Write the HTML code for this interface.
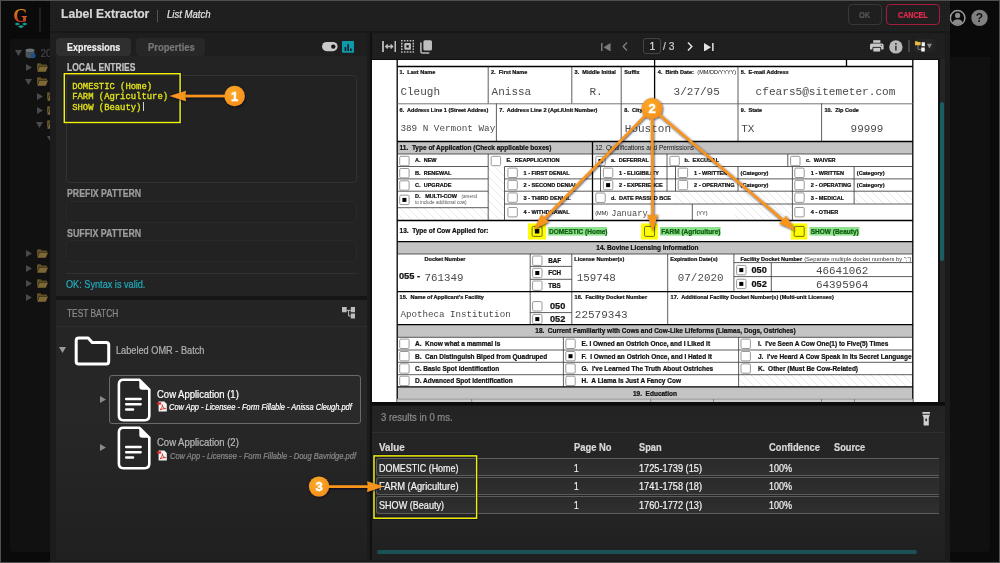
<!DOCTYPE html>
<html lang="en">
<head>
<meta charset="utf-8">
<title>Label Extractor - List Match</title>
<style>
*{box-sizing:border-box;margin:0;padding:0}
html,body{width:1000px;height:563px;overflow:hidden;background:#0a0a0a}
body{font-family:"Liberation Sans","DejaVu Sans",sans-serif;color:#ccc;position:relative}
div,span,svg,section,header,nav,ul,li,table,button{position:absolute}
.t{white-space:nowrap;line-height:1;transform-origin:0 50%;display:block;-webkit-text-stroke:.22px currentColor}
svg text{white-space:pre}
#app,#modal,#anno,svg.form{will-change:transform}
.form .fs{font-family:"Liberation Sans","DejaVu Sans",sans-serif}
.form .fm{font-family:"Liberation Mono","DejaVu Sans Mono",monospace}
.tex{background-image:linear-gradient(rgba(0,0,0,.09) 1px,transparent 1px),linear-gradient(90deg,rgba(0,0,0,.09) 1px,transparent 1px);background-size:2px 2px}
button{font-family:inherit;background:none;cursor:pointer}
#frame{left:0;top:0;width:1000px;height:563px;border:1px solid #505050;z-index:50;pointer-events:none}
</style>
</head>
<body>
<div id="app" style="left:0;top:0;width:1000px;height:563px;background:#0a0a0a">
<svg style="left:12px;top:6px" width="20" height="24" viewBox="0 0 20 24"><defs><linearGradient id="lg" x1="0" y1="0" x2="0" y2="1"><stop offset="0" stop-color="#e39a1c"/><stop offset="1" stop-color="#c2201c"/></linearGradient></defs><text x="1.2" y="15.7" font-family="Liberation Serif,serif" font-weight="bold" font-size="18.5" fill="url(#lg)">G</text><path d="M2.4 18.1l2.9-1.5 2.9 1.5-2.9 1.5zM9.8 18.1l2.9-1.5 2.9 1.5-2.9 1.5zM5.9 20.6l3.1-1.6 3.1 1.6-3.1 1.6z" fill="#12998f"/></svg>
<div style="left:39px;top:7px;width:1.5px;height:25px;background:#1f1f1f;border-radius:1px"></div>
<nav id="sidebar" style="left:10px;top:39px;width:60px;height:513px;background:#111;border-radius:4px">
<svg style="left:5px;top:11px" width="7" height="6" viewBox="0 0 7 6"><path d="M0 0L7 0L3.5 6z" fill="#4a4a4a"/></svg>
<svg style="left:15.4px;top:8.5px" width="11" height="11" viewBox="0 0 11 11"><ellipse cx="5" cy="2.4" rx="4.4" ry="1.9" fill="#6b7076"/><path d="M.6 2.4V8.3C.6 9.4 2.6 10.2 5 10.2S9.4 9.4 9.4 8.3V2.4C9.4 3.5 7.4 4.3 5 4.3S.6 3.5.6 2.4z" fill="#4e5359"/><circle cx="8" cy="7.6" r="2.6" fill="#1f4f86"/></svg>
<span class="t" style="left:30.40px;top:8.60px;font-size:10px;line-height:11px;color:#444;">20</span>
<svg style="left:15.5px;top:24.9px" width="6" height="7" viewBox="0 0 6 7"><path d="M0 0L6 3.5L0 7z" fill="#4a4a4a"/></svg>
<svg style="left:26.5px;top:23.9px" width="11" height="9" viewBox="0 0 11 9"><path d="M0 1.2Q0 .3 .9 .3H3.6L4.6 1.5H9.3Q10 1.5 10 2.3V3H2.4L0 8.2z" fill="#5e4f27"/><path d="M2.6 3.4H11L8.8 8.7H.3z" fill="#7d6833"/></svg>
<svg style="left:15px;top:39.5px" width="7" height="6" viewBox="0 0 7 6"><path d="M0 0L7 0L3.5 6z" fill="#4a4a4a"/></svg>
<svg style="left:26.5px;top:38.0px" width="11" height="9" viewBox="0 0 11 9"><path d="M0 1.2Q0 .3 .9 .3H3.6L4.6 1.5H9.3Q10 1.5 10 2.3V3H2.4L0 8.2z" fill="#5e4f27"/><path d="M2.6 3.4H11L8.8 8.7H.3z" fill="#7d6833"/></svg>
<svg style="left:26.5px;top:54.0px" width="6" height="7" viewBox="0 0 6 7"><path d="M0 0L6 3.5L0 7z" fill="#4a4a4a"/></svg>
<svg style="left:37.3px;top:53.0px" width="11" height="9" viewBox="0 0 11 9"><path d="M0 1.2Q0 .3 .9 .3H3.6L4.6 1.5H9.3Q10 1.5 10 2.3V3H2.4L0 8.2z" fill="#5e4f27"/><path d="M2.6 3.4H11L8.8 8.7H.3z" fill="#7d6833"/></svg>
<svg style="left:26.5px;top:68.3px" width="6" height="7" viewBox="0 0 6 7"><path d="M0 0L6 3.5L0 7z" fill="#4a4a4a"/></svg>
<svg style="left:37.3px;top:67.3px" width="11" height="9" viewBox="0 0 11 9"><path d="M0 1.2Q0 .3 .9 .3H3.6L4.6 1.5H9.3Q10 1.5 10 2.3V3H2.4L0 8.2z" fill="#5e4f27"/><path d="M2.6 3.4H11L8.8 8.7H.3z" fill="#7d6833"/></svg>
<svg style="left:26px;top:82.7px" width="7" height="6" viewBox="0 0 7 6"><path d="M0 0L7 0L3.5 6z" fill="#4a4a4a"/></svg>
<svg style="left:37.3px;top:81.2px" width="11" height="9" viewBox="0 0 11 9"><path d="M0 1.2Q0 .3 .9 .3H3.6L4.6 1.5H9.3Q10 1.5 10 2.3V3H2.4L0 8.2z" fill="#5e4f27"/><path d="M2.6 3.4H11L8.8 8.7H.3z" fill="#7d6833"/></svg>
<svg style="left:36.5px;top:96.5px" width="7" height="6" viewBox="0 0 7 6"><path d="M0 0L7 0L3.5 6z" fill="#4a4a4a"/></svg>
<svg style="left:15.5px;top:211.3px" width="6" height="7" viewBox="0 0 6 7"><path d="M0 0L6 3.5L0 7z" fill="#4a4a4a"/></svg>
<svg style="left:26.5px;top:210.3px" width="11" height="9" viewBox="0 0 11 9"><path d="M0 1.2Q0 .3 .9 .3H3.6L4.6 1.5H9.3Q10 1.5 10 2.3V3H2.4L0 8.2z" fill="#5e4f27"/><path d="M2.6 3.4H11L8.8 8.7H.3z" fill="#7d6833"/></svg>
<svg style="left:15.5px;top:225.7px" width="6" height="7" viewBox="0 0 6 7"><path d="M0 0L6 3.5L0 7z" fill="#4a4a4a"/></svg>
<svg style="left:26.5px;top:224.7px" width="11" height="9" viewBox="0 0 11 9"><path d="M0 1.2Q0 .3 .9 .3H3.6L4.6 1.5H9.3Q10 1.5 10 2.3V3H2.4L0 8.2z" fill="#5e4f27"/><path d="M2.6 3.4H11L8.8 8.7H.3z" fill="#7d6833"/></svg>
<svg style="left:15.5px;top:240.8px" width="6" height="7" viewBox="0 0 6 7"><path d="M0 0L6 3.5L0 7z" fill="#4a4a4a"/></svg>
<svg style="left:26.5px;top:239.8px" width="11" height="9" viewBox="0 0 11 9"><path d="M0 1.2Q0 .3 .9 .3H3.6L4.6 1.5H9.3Q10 1.5 10 2.3V3H2.4L0 8.2z" fill="#5e4f27"/><path d="M2.6 3.4H11L8.8 8.7H.3z" fill="#7d6833"/></svg>
<svg style="left:15.5px;top:255.2px" width="6" height="7" viewBox="0 0 6 7"><path d="M0 0L6 3.5L0 7z" fill="#4a4a4a"/></svg>
<svg style="left:26.5px;top:254.2px" width="11" height="9" viewBox="0 0 11 9"><path d="M0 1.2Q0 .3 .9 .3H3.6L4.6 1.5H9.3Q10 1.5 10 2.3V3H2.4L0 8.2z" fill="#5e4f27"/><path d="M2.6 3.4H11L8.8 8.7H.3z" fill="#7d6833"/></svg>
</nav>
<div style="left:950px;top:57px;width:40px;height:495px;background:#101010;border-radius:0 0 4px 0"></div>
<svg style="left:949px;top:9px" width="17" height="18" viewBox="0 0 17 18"><circle cx="8.6" cy="8.9" r="7.3" fill="#0a0a0a" stroke="#999" stroke-width="1.5"/><circle cx="8.6" cy="6.4" r="2.6" fill="#8a8a8a"/><path d="M3.6 13.6C4.4 11 6.4 10.3 8.6 10.3S12.8 11 13.6 13.6C12.3 15 10.6 15.8 8.6 15.8S4.9 15 3.6 13.6z" fill="#8a8a8a"/></svg>
<svg style="left:971px;top:9px" width="17" height="18" viewBox="0 0 17 18"><circle cx="8.5" cy="8.9" r="8.2" fill="#808080"/><text x="8.5" y="13.2" text-anchor="middle" font-family="Liberation Sans,sans-serif" font-weight="bold" font-size="12" fill="#111">?</text></svg>
</div>
<section id="modal" style="left:50px;top:1px;width:900px;height:561px;background:#1b1b1b">
<header class="tex" style="left:0;top:0;width:900px;height:29.6px;background-color:#222">
<span class="t" style="left:11.20px;top:5.10px;font-size:12.8px;line-height:15px;color:#d6d6d6;font-weight:bold;transform:scaleX(0.9477);">Label Extractor</span>
<div style="left:107.2px;top:9px;width:1px;height:11.5px;background:#555;"></div>
<span class="t" style="left:116.60px;top:8.10px;font-size:10px;line-height:11px;color:#e4e4e4;font-style:italic;transform:scaleX(0.9566);">List Match</span>
<button style="left:798.3px;top:2.5px;width:33.6px;height:21.3px;border:1px solid #383838;border-radius:4px"><span class="t" style="left:10.10px;top:6.60px;font-size:8.2px;line-height:9px;color:#565656;font-weight:bold;transform:scaleX(0.9120);">OK</span></button>
<button style="left:836px;top:2.5px;width:53.7px;height:21.3px;border:1px solid #a51f3d;border-radius:4px"><span class="t" style="left:11.20px;top:6.60px;font-size:8.2px;line-height:9px;color:#e62a50;font-weight:bold;transform:scaleX(0.8703);">CANCEL</span></button>
</header>
<div style="left:0px;top:29.6px;width:900px;height:2.9px;background:#181818;"></div>
<div id="left" style="left:0;top:31.5px;width:316.6px;height:527.2px;background:#151515">
<div style="left:0px;top:0px;width:316.6px;height:23.5px;background:#1e1e1e;"></div>
<div style="left:0px;top:23.5px;width:6px;height:503.7px;background:#1c1c1c;"></div>
<div style="left:6px;top:5.8px;width:75px;height:18.2px;background:#2f2f2f;border-radius:4px"><span class="t" style="left:11.20px;top:3.80px;font-size:10.4px;line-height:11px;color:#f0f0f0;font-weight:bold;transform:scaleX(0.8593);">Expressions</span></div>
<div style="left:86.4px;top:5.8px;width:68.6px;height:18.2px;background:#272727;border-radius:4px"><span class="t" style="left:11.30px;top:3.80px;font-size:10.4px;line-height:11px;color:#777;font-weight:bold;transform:scaleX(0.9104);">Properties</span></div>
<svg style="left:272px;top:9.9px" width="16" height="9.4" viewBox="0 0 16 9.4"><rect x="0" y="0" width="15.6" height="9.2" rx="4.6" fill="#c9c9c9"/><circle cx="11.3" cy="4.6" r="2.2" fill="#161616"/></svg>
<svg style="left:292.2px;top:8.5px" width="12.2" height="12" viewBox="0 0 12.2 12"><rect width="12.2" height="11.8" rx="0.8" fill="#0f9aa8"/><path d="M2.6 6h1.7v4H2.6zM5.3 3.2H7V10H5.3zM8 7.4h1.7V10H8z" fill="#123"/></svg>
<div id="expr" style="left:6px;top:23.5px;width:310.6px;height:240px;background:#232323">
<span class="t" style="left:10.60px;top:6.40px;font-size:10.2px;line-height:11px;color:#c4c4c4;font-weight:bold;transform:scaleX(0.8353);">LOCAL ENTRIES</span>
<div style="left:10px;top:19.3px;width:290.5px;height:107.6px;background:#222;border:1px solid #323232;border-radius:4px"></div>
<span class="t" style="left:16.20px;top:26.00px;font-size:8.9px;line-height:10px;color:#e4e418;font-family:'Liberation Mono','DejaVu Sans Mono',monospace;-webkit-text-stroke:.3px #e4e418;">DOMESTIC (Home)</span>
<span class="t" style="left:16.20px;top:36.00px;font-size:8.9px;line-height:10px;color:#e4e418;font-family:'Liberation Mono','DejaVu Sans Mono',monospace;-webkit-text-stroke:.3px #e4e418;">FARM (Agriculture)</span>
<span class="t" style="left:16.20px;top:47.00px;font-size:8.9px;line-height:10px;color:#e4e418;font-family:'Liberation Mono','DejaVu Sans Mono',monospace;-webkit-text-stroke:.3px #e4e418;">SHOW (Beauty)</span>
<div style="left:86.6px;top:46.2px;width:0.8px;height:9px;background:#d0d0d0;"></div>
<span class="t" style="left:10.60px;top:132.20px;font-size:10.2px;line-height:11px;color:#9d9d9d;font-weight:bold;transform:scaleX(0.8604);">PREFIX PATTERN</span>
<div style="left:10px;top:144.5px;width:290.5px;height:22px;background:#222;border:1px solid #292929;border-radius:4px"></div>
<span class="t" style="left:10.60px;top:171.70px;font-size:10.2px;line-height:11px;color:#9d9d9d;font-weight:bold;transform:scaleX(0.8663);">SUFFIX PATTERN</span>
<div style="left:10px;top:184.3px;width:290.5px;height:21.5px;background:#222;border:1px solid #292929;border-radius:4px"></div>
<div style="left:10px;top:216.8px;width:290.5px;height:1px;background:#303030;"></div>
<span class="t" style="left:10.20px;top:222.20px;font-size:10.8px;line-height:12px;color:#22aaba;transform:scaleX(0.8482);">OK: Syntax is valid.</span>
</div>
<div id="batch" style="left:6px;top:267.1px;width:310.6px;height:260.1px;background:linear-gradient(#242424,#272727 45%,#202020)">
<span class="t" style="left:10.50px;top:8.30px;font-size:10.2px;line-height:11px;color:#8c8c8c;transform:scaleX(0.8198);">TEST BATCH</span>
<svg style="left:285.7px;top:7.9px" width="13.6" height="11.6" viewBox="0 0 13.6 11.6"><path d="M0 0h4.7v5.3H0zM8.8 0h4.7v5.3H8.8zM8.8 6.6h4.7v4.9H8.8z" fill="#bdbdbd"/><path d="M4.7 3.4H8.8M6.6 3.4V9H8.8" stroke="#bdbdbd" stroke-width="1" fill="none"/></svg>
<div style="left:0px;top:26.4px;width:311px;height:1px;background:#2e2e2e;"></div>
<svg style="left:2.6px;top:47.8px" width="7" height="6" viewBox="0 0 7 6"><path d="M0 0L7 0L3.5 6z" fill="#999"/></svg>
<svg style="left:18px;top:36.9px" width="37" height="30" viewBox="0 0 37 30"><path d="M2.2 4.6Q2.2 2.1 4.7 2.1H14.2L18.2 6.6H32.2Q34.7 6.6 34.7 9.1V25.4Q34.7 27.9 32.2 27.9H4.7Q2.2 27.9 2.2 25.4z" fill="#232323" stroke="#fff" stroke-width="3" stroke-linejoin="round"/></svg>
<span class="t" style="left:59.60px;top:45.40px;font-size:10px;line-height:11px;color:#b0b0b0;transform:scaleX(0.9192);">Labeled OMR - Batch</span>
<div style="left:53.3px;top:75.9px;width:252px;height:48.6px;background:#2a2a2a;border:1px solid #6a6a6a;border-radius:3px"></div>
<svg style="left:44px;top:96.1px" width="6" height="7" viewBox="0 0 6 7"><path d="M0 0L6 3.5L0 7z" fill="#8a8a8a"/></svg>
<svg style="left:61.2px;top:78.1px" width="34" height="44" viewBox="0 0 34 44"><path d="M6.3 1.8H22.5L32.3 11.6V37.8Q32.3 42.2 27.9 42.2H6.3Q1.9 42.2 1.9 37.8V6.2Q1.9 1.8 6.3 1.8z" fill="#262626" stroke="#fff" stroke-width="2.6" stroke-linejoin="round"/><path d="M22.3 1.8V9Q22.3 11.8 25.1 11.8H32.3z" fill="#fff"/><path d="M9.2 21.1H23.6M9.2 26.3H23.6M9.2 31.5H16" stroke="#fff" stroke-width="2.5" stroke-linecap="round"/></svg>
<span class="t" style="left:100.80px;top:89.40px;font-size:10px;line-height:11px;color:#fff;transform:scaleX(0.9494);">Cow Application (1)</span>
<svg style="left:101px;top:101.7px" width="11" height="11" viewBox="0 0 11 11"><path d="M1.6 .6H7.4L9.8 3V10.4H1.6z" fill="#f4f4f4"/><path d="M0 1.4H4.2V3.6H0z" fill="#e21f1f"/><path d="M3 8.8C4.6 7.6 5.4 5.6 5.4 3.8C5.4 5.8 6.6 7.4 8.6 7.6C6.6 7.6 4.6 8 3 8.8z" fill="none" stroke="#d42a2a" stroke-width=".9"/></svg>
<span class="t" style="left:113.40px;top:102.60px;font-size:8.8px;line-height:10px;color:#fff;font-style:italic;transform:scaleX(0.8465);">Cow App - Licensee - Form Fillable - Anissa Cleugh.pdf</span>
<svg style="left:44px;top:144.3px" width="6" height="7" viewBox="0 0 6 7"><path d="M0 0L6 3.5L0 7z" fill="#8a8a8a"/></svg>
<svg style="left:61.2px;top:126.3px" width="34" height="44" viewBox="0 0 34 44"><path d="M6.3 1.8H22.5L32.3 11.6V37.8Q32.3 42.2 27.9 42.2H6.3Q1.9 42.2 1.9 37.8V6.2Q1.9 1.8 6.3 1.8z" fill="#262626" stroke="#fff" stroke-width="2.6" stroke-linejoin="round"/><path d="M22.3 1.8V9Q22.3 11.8 25.1 11.8H32.3z" fill="#fff"/><path d="M9.2 21.1H23.6M9.2 26.3H23.6M9.2 31.5H16" stroke="#fff" stroke-width="2.5" stroke-linecap="round"/></svg>
<span class="t" style="left:100.80px;top:137.90px;font-size:10px;line-height:11px;color:#b8b8b8;transform:scaleX(0.9494);">Cow Application (2)</span>
<svg style="left:101px;top:150.6px" width="11" height="11" viewBox="0 0 11 11"><path d="M1.6 .6H7.4L9.8 3V10.4H1.6z" fill="#f4f4f4"/><path d="M0 1.4H4.2V3.6H0z" fill="#e21f1f"/><path d="M3 8.8C4.6 7.6 5.4 5.6 5.4 3.8C5.4 5.8 6.6 7.4 8.6 7.6C6.6 7.6 4.6 8 3 8.8z" fill="none" stroke="#d42a2a" stroke-width=".9"/></svg>
<span class="t" style="left:113.80px;top:151.60px;font-size:8.8px;line-height:10px;color:#8a8a8a;font-style:italic;transform:scaleX(0.8542);">Cow App - Licensee - Form Fillable - Doug Bavridge.pdf</span>
</div>
</div>
<div style="left:319.6px;top:31.5px;width:2px;height:527.2px;background:#101010;"></div>
<div id="right" style="left:321.5px;top:31.5px;width:573.1px;height:527.2px;background:#141414">
<div class="tex" style="left:0;top:0;width:573.1px;height:26.7px;background-color:#222">
<svg style="left:10.5px;top:8.3px" width="14.4" height="11" viewBox="0 0 14.4 11"><path d="M1 .3V10.7M13.4 .3V10.7" stroke="#bdbdbd" stroke-width="1.8" stroke-linecap="round"/><path d="M4 5.5H10.4M5.8 3.5L3.8 5.5L5.8 7.5M8.6 3.5L10.6 5.5L8.6 7.5" stroke="#bdbdbd" stroke-width="1.5" fill="none"/></svg>
<svg style="left:29.8px;top:7.3px" width="13.2" height="12.8" viewBox="0 0 13.2 12.8"><path d="M0.00 0.00h1.6v1.6h-1.6zM0.00 2.80h1.6v1.6h-1.6zM0.00 5.60h1.6v1.6h-1.6zM0.00 8.40h1.6v1.6h-1.6zM0.00 11.20h1.6v1.6h-1.6zM2.90 0.00h1.6v1.6h-1.6zM2.90 11.20h1.6v1.6h-1.6zM5.80 0.00h1.6v1.6h-1.6zM5.80 11.20h1.6v1.6h-1.6zM8.70 0.00h1.6v1.6h-1.6zM8.70 11.20h1.6v1.6h-1.6zM11.60 0.00h1.6v1.6h-1.6zM11.60 2.80h1.6v1.6h-1.6zM11.60 5.60h1.6v1.6h-1.6zM11.60 8.40h1.6v1.6h-1.6zM11.60 11.20h1.6v1.6h-1.6z" fill="#bdbdbd"/><rect x="3.3" y="3.1" width="6.6" height="6.6" rx="1" fill="#bdbdbd"/><rect x="5.4" y="5.2" width="2.4" height="2.4" fill="#111"/></svg>
<svg style="left:48.3px;top:7.1px" width="12.6" height="14" viewBox="0 0 12.6 14"><rect x="3.4" y="0.2" width="8.6" height="10.4" rx="1.6" fill="#bdbdbd"/><path d="M.9 3V11.4Q.9 13 2.5 13H8.8" stroke="#bdbdbd" stroke-width="1.5" fill="none" stroke-linecap="round"/></svg>
<svg style="left:229.5px;top:10.1px" width="10" height="8.6" viewBox="0 0 10 8.6"><path d="M0 0H1.5V8.6H0zM9.6 0V8.6L2.6 4.3z" fill="#7c7c7c"/></svg>
<svg style="left:250.5px;top:9.9px" width="6" height="9" viewBox="0 0 6 9"><path d="M5 .6L1.2 4.5L5 8.4" stroke="#7c7c7c" stroke-width="1.4" fill="none"/></svg>
<div style="left:271.7px;top:5.5px;width:18px;height:16px;background:#1e1e1e;border:1px solid #444;border-radius:3px"></div>
<span class="t" style="left:277.90px;top:7.80px;font-size:10.5px;line-height:12px;color:#ddd;">1</span>
<span class="t" style="left:291.90px;top:7.80px;font-size:10.5px;line-height:12px;color:#ccc;transform:scaleX(0.9754);">/ 3</span>
<svg style="left:315.5px;top:9.9px" width="6" height="9" viewBox="0 0 6 9"><path d="M1 .6L4.8 4.5L1 8.4" stroke="#e2e2e2" stroke-width="1.5" fill="none"/></svg>
<svg style="left:332.5px;top:10.1px" width="10" height="8.6" viewBox="0 0 10 8.6"><path d="M8.1 0H9.6V8.6H8.1zM0 0V8.6L7 4.3z" fill="#e2e2e2"/></svg>
<svg style="left:498.5px;top:7.5px" width="13.6" height="12.2" viewBox="0 0 13.6 12.2"><path d="M3.2 .2H10.4V2.8H3.2z" fill="#c9c9c9"/><path d="M1.6 3.4H12Q13.6 3.4 13.6 5V9.6H0V5Q0 3.4 1.6 3.4z" fill="#c9c9c9"/><path d="M2.9 7.4H10.7V12H2.9z" fill="#c9c9c9" stroke="#1c1c1c" stroke-width=".9"/><circle cx="11.4" cy="5.3" r=".6" fill="#333"/></svg>
<svg style="left:517.2px;top:7.1px" width="14" height="14" viewBox="0 0 14 14"><circle cx="6.9" cy="6.9" r="6.7" fill="#b9b9b9"/><circle cx="6.9" cy="3.8" r=".9" fill="#222"/><path d="M6.2 5.7H7.6V10.4H6.2z" fill="#222"/></svg>
<div style="left:536.5px;top:7.9px;width:1.6px;height:11.4px;background:#454545;"></div>
<div style="left:542.1px;top:6.9px;width:21px;height:13px;background:#242424;border-radius:3px"></div>
<svg style="left:543.9px;top:8.3px" width="18" height="12" viewBox="0 0 18 12"><path d="M3 4V8.4H6.4" stroke="#8a8a8a" stroke-width=".9" fill="none"/><path d="M0 .3H2.2L3 1.1H5.6V4.2H0z" fill="#e8b93c"/><path d="M6.6 1.2H9.9V5.2H6.6zM6.2 6.4H9.8V10.4H6.2z" fill="#f4f4f4"/><path d="M11.8 2.8H17L14.4 7.6z" fill="#8a8a8a"/></svg>
</div>
<div id="viewer" style="left:0;top:26.7px;width:573.1px;height:346.3px;background:#0c0c0c">
<div id="docpage" style="left:.5px;top:.8px;width:566px;height:342px;background:#fff;overflow:hidden">
<svg class="form" style="left:0;top:0" width="566" height="342" viewBox="372 60 566 342">
<defs><pattern id="hatch" width="8" height="8" patternUnits="userSpaceOnUse"><path d="M-1 -1L9 9M-1 7L1 9M7 -1L9 1" stroke="#dcdcdc" stroke-width="0.6" fill="none"/></pattern></defs>
<rect x="372" y="60" width="566" height="342" fill="#fff"/>
<rect x="397.2" y="141.5" width="515.6" height="12.5" fill="#c4c4c4"/>
<rect x="397.2" y="241.7" width="515.6" height="12.3" fill="#c4c4c4"/>
<rect x="397.2" y="324.7" width="515.6" height="12.6" fill="#c4c4c4"/>
<rect x="397.2" y="386.9" width="515.6" height="11.7" fill="#c4c4c4"/>
<rect x="488.2" y="166.5" width="16.3" height="54.0" fill="url(#hatch)"/>
<rect x="397.2" y="207.7" width="91.0" height="12.8" fill="url(#hatch)"/>
<rect x="674.5" y="191.2" width="117.9" height="12.8" fill="url(#hatch)"/>
<rect x="735" y="204" width="57.4" height="16.5" fill="url(#hatch)"/>
<rect x="854.1" y="191.2" width="58.7" height="12.8" fill="url(#hatch)"/>
<rect x="738.6" y="374.7" width="174.2" height="12.2" fill="url(#hatch)"/>
<line x1="397.2" y1="59" x2="397.2" y2="402" stroke="#000" stroke-width="1.3"/>
<line x1="912.8" y1="59" x2="912.8" y2="402" stroke="#000" stroke-width="1.3"/>
<line x1="654.6" y1="59" x2="654.6" y2="103.5" stroke="#000" stroke-width="1.3"/>
<line x1="846.5" y1="59" x2="846.5" y2="66.5" stroke="#000" stroke-width="1.3"/>
<line x1="397.2" y1="66.5" x2="912.8" y2="66.5" stroke="#000" stroke-width="1.3"/>
<line x1="488.2" y1="66.5" x2="488.2" y2="103.5" stroke="#333" stroke-width="0.8"/>
<line x1="571.8" y1="66.5" x2="571.8" y2="103.5" stroke="#333" stroke-width="0.8"/>
<line x1="621.2" y1="66.5" x2="621.2" y2="103.5" stroke="#333" stroke-width="0.8"/>
<line x1="738" y1="66.5" x2="738" y2="103.5" stroke="#333" stroke-width="0.8"/>
<line x1="397.2" y1="103.8" x2="912.8" y2="103.8" stroke="#666" stroke-width="0.9"/>
<line x1="496.4" y1="103.5" x2="496.4" y2="141.5" stroke="#333" stroke-width="0.8"/>
<line x1="621.2" y1="103.5" x2="621.2" y2="141.5" stroke="#333" stroke-width="0.8"/>
<line x1="738" y1="103.5" x2="738" y2="141.5" stroke="#333" stroke-width="0.8"/>
<line x1="821.6" y1="103.5" x2="821.6" y2="141.5" stroke="#333" stroke-width="0.8"/>
<line x1="397.2" y1="141.5" x2="912.8" y2="141.5" stroke="#000" stroke-width="1.3"/>
<text class="fs" x="399.6" y="74.1" font-size="5.55" font-weight="bold" stroke="#111" stroke-width=".22" fill="#111">1.  Last Name</text>
<text class="fs" x="491" y="74.1" font-size="5.55" font-weight="bold" stroke="#111" stroke-width=".22" fill="#111">2.  First Name</text>
<text class="fs" x="574.6" y="74.1" font-size="5.55" font-weight="bold" stroke="#111" stroke-width=".22" fill="#111">3.  Middle Initial</text>
<text class="fs" x="624.3" y="74.1" font-size="5.55" font-weight="bold" stroke="#111" stroke-width=".22" fill="#111">Suffix</text>
<text class="fs" x="657.8" y="74.1" font-size="5.55" font-weight="bold" stroke="#111" stroke-width=".22" fill="#111">4.  Birth Date:</text>
<text class="fs" x="697.3" y="74.1" font-size="5.55" fill="#111">(MM/DD/YYYY)</text>
<text class="fs" x="740.8" y="74.1" font-size="5.55" font-weight="bold" stroke="#111" stroke-width=".22" fill="#111">5.  E-mail Address</text>
<text class="fs" x="399.6" y="111.6" font-size="5.55" font-weight="bold" stroke="#111" stroke-width=".22" fill="#111">6.  Address Line 1 (Street Addres)</text>
<text class="fs" x="499.3" y="111.6" font-size="5.55" font-weight="bold" stroke="#111" stroke-width=".22" fill="#111">7.  Address Line 2 (Apt./Unit Number)</text>
<text class="fs" x="624.3" y="111.6" font-size="5.55" font-weight="bold" stroke="#111" stroke-width=".22" fill="#111">8.  City</text>
<text class="fs" x="740.8" y="111.6" font-size="5.55" font-weight="bold" stroke="#111" stroke-width=".22" fill="#111">9.  State</text>
<text class="fs" x="824.4" y="111.6" font-size="5.55" font-weight="bold" stroke="#111" stroke-width=".22" fill="#111">10.  Zip Code</text>
<text class="fm" x="400.4" y="95" font-size="11" fill="#4a4a4a">Cleugh</text>
<text class="fm" x="491.6" y="95" font-size="11" fill="#4a4a4a">Anissa</text>
<text class="fm" x="589.5" y="95" font-size="11" fill="#4a4a4a">R.</text>
<text class="fm" x="673.6" y="95" font-size="11" fill="#4a4a4a">3/27/95</text>
<text class="fm" x="755.6" y="95" font-size="11.1" fill="#4a4a4a">cfears5@sitemeter.com</text>
<text class="fm" x="400.4" y="130.8" font-size="9.3" fill="#4a4a4a">389 N Vermont Way</text>
<text class="fm" x="624.8" y="131.5" font-size="11" fill="#4a4a4a">Houston</text>
<text class="fm" x="741.2" y="131.5" font-size="11" fill="#4a4a4a">TX</text>
<text class="fm" x="850.6" y="131.5" font-size="10.9" fill="#4a4a4a">99999</text>
<text class="fs" x="399.6" y="150.3" font-size="6.5" font-weight="bold" stroke="#111" stroke-width=".22" fill="#111">11.  Type of Application (Check applicable boxes)</text>
<text class="fs" x="595.2" y="150.3" font-size="6.45" fill="#111">12. Qualifications and Permissions</text>
<line x1="592.5" y1="141.5" x2="592.5" y2="220.5" stroke="#000" stroke-width="1.3"/>
<line x1="397.2" y1="154" x2="912.8" y2="154" stroke="#333" stroke-width="0.8"/>
<line x1="397.2" y1="166.5" x2="488.2" y2="166.5" stroke="#333" stroke-width="0.8"/>
<line x1="504.5" y1="166.5" x2="592.5" y2="166.5" stroke="#333" stroke-width="0.8"/>
<line x1="592.5" y1="166.5" x2="912.8" y2="166.5" stroke="#333" stroke-width="0.8"/>
<line x1="397.2" y1="178.9" x2="488.2" y2="178.9" stroke="#333" stroke-width="0.8"/>
<line x1="504.5" y1="178.9" x2="592.5" y2="178.9" stroke="#333" stroke-width="0.8"/>
<line x1="592.5" y1="178.9" x2="912.8" y2="178.9" stroke="#333" stroke-width="0.8"/>
<line x1="397.2" y1="191.2" x2="488.2" y2="191.2" stroke="#333" stroke-width="0.8"/>
<line x1="504.5" y1="191.2" x2="592.5" y2="191.2" stroke="#333" stroke-width="0.8"/>
<line x1="592.5" y1="191.2" x2="912.8" y2="191.2" stroke="#333" stroke-width="0.8"/>
<line x1="397.2" y1="207.7" x2="488.2" y2="207.7" stroke="#333" stroke-width="0.8"/>
<line x1="504.5" y1="204" x2="592.5" y2="204" stroke="#333" stroke-width="0.8"/>
<line x1="592.5" y1="204" x2="912.8" y2="204" stroke="#333" stroke-width="0.8"/>
<line x1="488.2" y1="154" x2="488.2" y2="220.5" stroke="#333" stroke-width="0.8"/>
<line x1="504.5" y1="166.5" x2="504.5" y2="220.5" stroke="#333" stroke-width="0.8"/>
<line x1="600.5" y1="166.5" x2="600.5" y2="191.2" stroke="#333" stroke-width="0.8"/>
<line x1="667" y1="154" x2="667" y2="191.2" stroke="#333" stroke-width="0.8"/>
<line x1="675.5" y1="166.5" x2="675.5" y2="191.2" stroke="#333" stroke-width="0.8"/>
<line x1="738" y1="166.5" x2="738" y2="191.2" stroke="#333" stroke-width="0.8"/>
<line x1="787.8" y1="154" x2="787.8" y2="166.5" stroke="#333" stroke-width="0.8"/>
<line x1="792.4" y1="166.5" x2="792.4" y2="220.5" stroke="#333" stroke-width="0.8"/>
<line x1="854.1" y1="166.5" x2="854.1" y2="204" stroke="#333" stroke-width="0.8"/>
<line x1="692.3" y1="204" x2="692.3" y2="220.5" stroke="#333" stroke-width="0.8"/>
<line x1="397.2" y1="220.5" x2="912.8" y2="220.5" stroke="#000" stroke-width="1.3"/>
<rect x="399.7" y="156.3" width="9.4" height="9.4" rx="1.2" fill="#fff" stroke="#8c8c8c" stroke-width="0.9"/>
<text class="fs" x="415" y="162.4" font-size="5.55" font-weight="bold" stroke="#111" stroke-width=".22" fill="#111">A.  NEW</text>
<rect x="399.7" y="168.5" width="9.4" height="9.4" rx="1.2" fill="#fff" stroke="#8c8c8c" stroke-width="0.9"/>
<text class="fs" x="415" y="174.6" font-size="5.55" font-weight="bold" stroke="#111" stroke-width=".22" fill="#111">B.  RENEWAL</text>
<rect x="399.7" y="180.8" width="9.4" height="9.4" rx="1.2" fill="#fff" stroke="#8c8c8c" stroke-width="0.9"/>
<text class="fs" x="415" y="186.9" font-size="5.55" font-weight="bold" stroke="#111" stroke-width=".22" fill="#111">C.  UPGRADE</text>
<rect x="399.7" y="195.2" width="9.4" height="9.4" rx="1.2" fill="#fff" stroke="#8c8c8c" stroke-width="0.9"/>
<rect x="402.4" y="197.9" width="4" height="4" fill="#000"/>
<text class="fs" x="415" y="198.3" font-size="5.55" font-weight="bold" stroke="#111" stroke-width=".22" fill="#111">D.   MULTI-COW</text>
<text class="fs" x="461.5" y="198.3" font-size="4.6" fill="#555">(amend</text>
<text class="fs" x="415" y="204.4" font-size="4.6" fill="#555">to include additional cow)</text>
<rect x="491.2" y="156.3" width="9.4" height="9.4" rx="1.2" fill="#fff" stroke="#8c8c8c" stroke-width="0.9"/>
<text class="fs" x="506.4" y="162.4" font-size="5.55" font-weight="bold" stroke="#111" stroke-width=".22" fill="#111">E.  REAPPLICATION</text>
<rect x="507.9" y="168.1" width="9.4" height="9.4" rx="1.2" fill="#fff" stroke="#8c8c8c" stroke-width="0.9"/>
<text class="fs" x="523.5" y="174.8" font-size="5.55" font-weight="bold" stroke="#111" stroke-width=".22" fill="#111">1 - FIRST DENIAL</text>
<rect x="507.9" y="180.4" width="9.4" height="9.4" rx="1.2" fill="#fff" stroke="#8c8c8c" stroke-width="0.9"/>
<text class="fs" x="523.5" y="187.1" font-size="5.55" font-weight="bold" stroke="#111" stroke-width=".22" fill="#111">2 - SECOND DENIAL</text>
<rect x="507.9" y="192.9" width="9.4" height="9.4" rx="1.2" fill="#fff" stroke="#8c8c8c" stroke-width="0.9"/>
<text class="fs" x="523.5" y="199.6" font-size="5.55" font-weight="bold" stroke="#111" stroke-width=".22" fill="#111">3 - THIRD DENIAL</text>
<rect x="507.9" y="207.5" width="9.4" height="9.4" rx="1.2" fill="#fff" stroke="#8c8c8c" stroke-width="0.9"/>
<text class="fs" x="523.5" y="214.2" font-size="5.55" font-weight="bold" stroke="#111" stroke-width=".22" fill="#111">4 - WITHDRAWAL</text>
<rect x="595.8" y="156.3" width="9.4" height="9.4" rx="1.2" fill="#fff" stroke="#8c8c8c" stroke-width="0.9"/>
<rect x="598.5" y="159.0" width="4" height="4" fill="#000"/>
<text class="fs" x="611" y="162.4" font-size="5.55" font-weight="bold" stroke="#111" stroke-width=".22" fill="#111">a.  DEFERRAL</text>
<rect x="669.9" y="156.3" width="9.4" height="9.4" rx="1.2" fill="#fff" stroke="#8c8c8c" stroke-width="0.9"/>
<text class="fs" x="684.5" y="162.4" font-size="5.55" font-weight="bold" stroke="#111" stroke-width=".22" fill="#111">b.  EXCUSAL</text>
<rect x="790.6" y="156.3" width="9.4" height="9.4" rx="1.2" fill="#fff" stroke="#8c8c8c" stroke-width="0.9"/>
<text class="fs" x="806" y="162.4" font-size="5.55" font-weight="bold" stroke="#111" stroke-width=".22" fill="#111">c.  WAIVER</text>
<rect x="603.4" y="168.1" width="9.4" height="9.4" rx="1.2" fill="#fff" stroke="#8c8c8c" stroke-width="0.9"/>
<text class="fs" x="619" y="174.8" font-size="5.55" font-weight="bold" stroke="#111" stroke-width=".22" fill="#111">1 - ELIGIBILITY</text>
<rect x="603.4" y="180.4" width="9.4" height="9.4" rx="1.2" fill="#fff" stroke="#8c8c8c" stroke-width="0.9"/>
<rect x="606.1" y="183.1" width="4" height="4" fill="#000"/>
<text class="fs" x="619" y="187.1" font-size="5.55" font-weight="bold" stroke="#111" stroke-width=".22" fill="#111">2 - EXPERIENCE</text>
<rect x="678.2" y="168.1" width="9.4" height="9.4" rx="1.2" fill="#fff" stroke="#8c8c8c" stroke-width="0.9"/>
<text class="fs" x="694" y="174.8" font-size="5.55" font-weight="bold" stroke="#111" stroke-width=".22" fill="#111">1 - WRITTEN</text>
<text class="fs" x="740.6" y="174.8" font-size="5.55" font-weight="bold" stroke="#111" stroke-width=".22" fill="#111">(Category)</text>
<rect x="678.2" y="180.4" width="9.4" height="9.4" rx="1.2" fill="#fff" stroke="#8c8c8c" stroke-width="0.9"/>
<text class="fs" x="694" y="187.1" font-size="5.55" font-weight="bold" stroke="#111" stroke-width=".22" fill="#111">2 - OPERATING</text>
<text class="fs" x="740.6" y="187.1" font-size="5.55" font-weight="bold" stroke="#111" stroke-width=".22" fill="#111">(Category)</text>
<rect x="595.8" y="193" width="9.4" height="9.4" rx="1.2" fill="#fff" stroke="#8c8c8c" stroke-width="0.9"/>
<text class="fs" x="611" y="199.6" font-size="5.55" font-weight="bold" stroke="#111" stroke-width=".22" fill="#111">d.  DATE PASSED BCE</text>
<text class="fs" x="595.2" y="214.6" font-size="5.6" fill="#222">(MM)</text>
<text class="fm" x="611.2" y="215.6" font-size="8.7" fill="#4a4a4a">January</text>
<text class="fs" x="696.4" y="214.6" font-size="5.6" fill="#222">(YY)</text>
<rect x="794.8" y="168.1" width="9.4" height="9.4" rx="1.2" fill="#fff" stroke="#8c8c8c" stroke-width="0.9"/>
<text class="fs" x="810.8" y="174.8" font-size="5.55" font-weight="bold" stroke="#111" stroke-width=".22" fill="#111">1 - WRITTEN</text>
<text class="fs" x="856.8" y="174.8" font-size="5.55" font-weight="bold" stroke="#111" stroke-width=".22" fill="#111">(Category)</text>
<rect x="794.8" y="180.4" width="9.4" height="9.4" rx="1.2" fill="#fff" stroke="#8c8c8c" stroke-width="0.9"/>
<text class="fs" x="810.8" y="187.1" font-size="5.55" font-weight="bold" stroke="#111" stroke-width=".22" fill="#111">2 - OPERATING</text>
<text class="fs" x="856.8" y="187.1" font-size="5.55" font-weight="bold" stroke="#111" stroke-width=".22" fill="#111">(Category)</text>
<rect x="794.8" y="192.9" width="9.4" height="9.4" rx="1.2" fill="#fff" stroke="#8c8c8c" stroke-width="0.9"/>
<text class="fs" x="810.8" y="199.6" font-size="5.55" font-weight="bold" stroke="#111" stroke-width=".22" fill="#111">3 - MEDICAL</text>
<rect x="794.8" y="207.5" width="9.4" height="9.4" rx="1.2" fill="#fff" stroke="#8c8c8c" stroke-width="0.9"/>
<text class="fs" x="810.8" y="214.2" font-size="5.55" font-weight="bold" stroke="#111" stroke-width=".22" fill="#111">4 - OTHER</text>
<text class="fs" x="399.6" y="233.4" font-size="6.5" font-weight="bold" stroke="#111" stroke-width=".22" fill="#111">13.  Type of Cow Applied for:</text>
<rect x="528" y="223.4" width="18" height="16.1" fill="#ffff00"/>
<rect x="532.10" y="226.4" width="10" height="10" rx="1.2" fill="none" stroke="#6d6d14" stroke-width="1"/>
<rect x="534.90" y="229.1" width="4.4" height="4.4" fill="#000"/>
<rect x="547.8" y="227" width="59.2" height="8.6" fill="#8fe08f"/>
<text class="fs" x="549.0" y="233.5" font-size="6.5" font-weight="bold" stroke="#0b5a0b" stroke-width=".22" fill="#0b5a0b">DOMESTIC (Home)</text>
<rect x="641" y="223.4" width="16.9" height="16.1" fill="#ffff00"/>
<rect x="644.55" y="226.4" width="10" height="10" rx="1.2" fill="none" stroke="#6d6d14" stroke-width="1"/>
<rect x="660" y="227" width="60.6" height="8.6" fill="#8fe08f"/>
<text class="fs" x="661.2" y="233.5" font-size="6.5" font-weight="bold" stroke="#0b5a0b" stroke-width=".22" fill="#0b5a0b">FARM (Agriculture)</text>
<rect x="791" y="223.4" width="16.2" height="16.1" fill="#ffff00"/>
<rect x="794.20" y="226.4" width="10" height="10" rx="1.2" fill="none" stroke="#6d6d14" stroke-width="1"/>
<rect x="809.5" y="227" width="49.9" height="8.6" fill="#8fe08f"/>
<text class="fs" x="810.7" y="233.5" font-size="6.5" font-weight="bold" stroke="#0b5a0b" stroke-width=".22" fill="#0b5a0b">SHOW (Beauty)</text>
<line x1="397.2" y1="241.7" x2="912.8" y2="241.7" stroke="#000" stroke-width="1.3"/>
<text class="fs" x="647.4" y="250.2" font-size="6.5" font-weight="bold" stroke="#111" stroke-width=".22" fill="#111" text-anchor="middle">14. Bovine Licensing Information</text>
<line x1="397.2" y1="254" x2="912.8" y2="254" stroke="#333" stroke-width="0.8"/>
<line x1="530.2" y1="254" x2="530.2" y2="324.7" stroke="#333" stroke-width="0.8"/>
<line x1="571.8" y1="254" x2="571.8" y2="324.7" stroke="#333" stroke-width="0.8"/>
<line x1="667.7" y1="254" x2="667.7" y2="324.7" stroke="#333" stroke-width="0.8"/>
<line x1="733.9" y1="254" x2="733.9" y2="291.7" stroke="#333" stroke-width="0.8"/>
<line x1="530.2" y1="266.4" x2="571.8" y2="266.4" stroke="#333" stroke-width="0.8"/>
<line x1="530.2" y1="279.3" x2="571.8" y2="279.3" stroke="#333" stroke-width="0.8"/>
<line x1="733.9" y1="262.6" x2="912.8" y2="262.6" stroke="#333" stroke-width="0.8"/>
<line x1="733.9" y1="276.6" x2="912.8" y2="276.6" stroke="#333" stroke-width="0.8"/>
<line x1="771.3" y1="262.6" x2="771.3" y2="291.7" stroke="#333" stroke-width="0.8"/>
<text class="fs" x="445" y="261.4" font-size="5.55" font-weight="bold" stroke="#111" stroke-width=".22" fill="#111" text-anchor="middle">Docket Number</text>
<text class="fs" x="574.3" y="261.4" font-size="5.55" font-weight="bold" stroke="#111" stroke-width=".22" fill="#111">License Number(s)</text>
<text class="fs" x="670.2" y="261.4" font-size="5.55" font-weight="bold" stroke="#111" stroke-width=".22" fill="#111">Expiration Date(s)</text>
<text class="fs" x="740.4" y="260.5" font-size="5.55" font-weight="bold" stroke="#111" stroke-width=".22" fill="#111">Facility Docket Number</text>
<text class="fs" x="804.2" y="260.5" font-size="5.4" fill="#333" textLength="107.3" lengthAdjust="spacingAndGlyphs">(Separate multiple docket numbers by ";")</text>
<text class="fs" x="398.9" y="279.4" font-size="9.3" font-weight="bold" stroke="#111" stroke-width=".22" fill="#111">055 -</text>
<text class="fm" x="424.6" y="280.6" font-size="10.8" fill="#4a4a4a">761349</text>
<rect x="532.6" y="256" width="9.4" height="9.4" rx="1.2" fill="#fff" stroke="#8c8c8c" stroke-width="0.9"/>
<text class="fs" x="548.2" y="263" font-size="6.3" font-weight="bold" stroke="#111" stroke-width=".22" fill="#111">BAF</text>
<rect x="532.6" y="268.3" width="9.4" height="9.4" rx="1.2" fill="#fff" stroke="#8c8c8c" stroke-width="0.9"/>
<rect x="535.3" y="271.0" width="4" height="4" fill="#000"/>
<text class="fs" x="548.2" y="275.3" font-size="6.3" font-weight="bold" stroke="#111" stroke-width=".22" fill="#111">FCH</text>
<rect x="532.6" y="281" width="9.4" height="9.4" rx="1.2" fill="#fff" stroke="#8c8c8c" stroke-width="0.9"/>
<text class="fs" x="548.2" y="288" font-size="6.3" font-weight="bold" stroke="#111" stroke-width=".22" fill="#111">TBS</text>
<text class="fm" x="576.7" y="281.4" font-size="10.9" fill="#4a4a4a">159748</text>
<text class="fm" x="677.8" y="281.4" font-size="10.9" fill="#4a4a4a">07/2020</text>
<rect x="736.6" y="265.4" width="9.4" height="9.4" rx="1.2" fill="#fff" stroke="#8c8c8c" stroke-width="0.9"/>
<rect x="739.3" y="268.1" width="4" height="4" fill="#000"/>
<text class="fs" x="751.5" y="272.6" font-size="9.2" font-weight="bold" stroke="#111" stroke-width=".22" fill="#111">050</text>
<rect x="736.6" y="279.2" width="9.4" height="9.4" rx="1.2" fill="#fff" stroke="#8c8c8c" stroke-width="0.9"/>
<rect x="739.3" y="281.9" width="4" height="4" fill="#000"/>
<text class="fs" x="751.5" y="286.8" font-size="9.2" font-weight="bold" stroke="#111" stroke-width=".22" fill="#111">052</text>
<text class="fm" x="816" y="273.8" font-size="10.9" fill="#4a4a4a">46641062</text>
<text class="fm" x="816" y="288.1" font-size="10.9" fill="#4a4a4a">64395964</text>
<line x1="397.2" y1="291.7" x2="912.8" y2="291.7" stroke="#000" stroke-width="1.3"/>
<text class="fs" x="399.6" y="299.2" font-size="5.55" font-weight="bold" stroke="#111" stroke-width=".22" fill="#111">15.  Name of Applicant's Facility</text>
<text class="fs" x="574.6" y="299.2" font-size="5.55" font-weight="bold" stroke="#111" stroke-width=".22" fill="#111">16.  Facility Docket Number</text>
<text class="fs" x="670.6" y="299.2" font-size="5.55" font-weight="bold" stroke="#111" stroke-width=".22" fill="#111">17.  Additional Facility Docket Number(s) (Multi-unit Licenses)</text>
<text class="fm" x="400.4" y="317" font-size="9.2" fill="#4a4a4a">Apotheca Institution</text>
<text class="fm" x="574.8" y="318" font-size="11" fill="#4a4a4a">22579343</text>
<line x1="530.2" y1="312.6" x2="571.8" y2="312.6" stroke="#333" stroke-width="0.8"/>
<rect x="532.6" y="301.6" width="9.4" height="9.4" rx="1.2" fill="#fff" stroke="#8c8c8c" stroke-width="0.9"/>
<text class="fs" x="550" y="308.6" font-size="9.2" font-weight="bold" stroke="#111" stroke-width=".22" fill="#111">050</text>
<rect x="532.6" y="314.4" width="9.4" height="9.4" rx="1.2" fill="#fff" stroke="#8c8c8c" stroke-width="0.9"/>
<rect x="535.3" y="317.1" width="4" height="4" fill="#000"/>
<text class="fs" x="550" y="321.5" font-size="9.2" font-weight="bold" stroke="#111" stroke-width=".22" fill="#111">052</text>
<line x1="397.2" y1="324.7" x2="912.8" y2="324.7" stroke="#000" stroke-width="1.3"/>
<text class="fs" x="535.3" y="333.4" font-size="6.5" font-weight="bold" stroke="#111" stroke-width=".22" fill="#111" textLength="260.3" lengthAdjust="spacingAndGlyphs">18.  Current Familiarity with Cows and Cow-Like Lifeforms (Llamas, Dogs, Ostriches)</text>
<line x1="397.2" y1="337.3" x2="912.8" y2="337.3" stroke="#333" stroke-width="0.8"/>
<line x1="397.2" y1="350" x2="912.8" y2="350" stroke="#333" stroke-width="0.8"/>
<line x1="397.2" y1="362.3" x2="912.8" y2="362.3" stroke="#333" stroke-width="0.8"/>
<line x1="397.2" y1="374.7" x2="912.8" y2="374.7" stroke="#333" stroke-width="0.8"/>
<line x1="563.4" y1="337.3" x2="563.4" y2="386.9" stroke="#333" stroke-width="0.8"/>
<line x1="738.6" y1="337.3" x2="738.6" y2="386.9" stroke="#333" stroke-width="0.8"/>
<rect x="399.7" y="339.1" width="9.4" height="9.4" rx="1.2" fill="#fff" stroke="#8c8c8c" stroke-width="0.9"/>
<text class="fs" x="415" y="346.2" font-size="6.5" font-weight="bold" stroke="#111" stroke-width=".22" fill="#111">A.  Know what a mammal is</text>
<rect x="399.7" y="351.5" width="9.4" height="9.4" rx="1.2" fill="#fff" stroke="#8c8c8c" stroke-width="0.9"/>
<text class="fs" x="415" y="358.6" font-size="6.5" font-weight="bold" stroke="#111" stroke-width=".22" fill="#111">B.  Can Distinguish Biped from Quadruped</text>
<rect x="399.7" y="363.8" width="9.4" height="9.4" rx="1.2" fill="#fff" stroke="#8c8c8c" stroke-width="0.9"/>
<text class="fs" x="415" y="370.9" font-size="6.5" font-weight="bold" stroke="#111" stroke-width=".22" fill="#111">C. Basic Spot Identification</text>
<rect x="399.7" y="376.2" width="9.4" height="9.4" rx="1.2" fill="#fff" stroke="#8c8c8c" stroke-width="0.9"/>
<text class="fs" x="415" y="383.3" font-size="6.5" font-weight="bold" stroke="#111" stroke-width=".22" fill="#111">D. Advanced Spot Identification</text>
<rect x="565.8" y="339.1" width="9.4" height="9.4" rx="1.2" fill="#fff" stroke="#8c8c8c" stroke-width="0.9"/>
<text class="fs" x="581.5" y="346.2" font-size="6.5" font-weight="bold" stroke="#111" stroke-width=".22" fill="#111">E. I Owned an Ostrich Once, and I Liked It</text>
<rect x="565.8" y="351.5" width="9.4" height="9.4" rx="1.2" fill="#fff" stroke="#8c8c8c" stroke-width="0.9"/>
<rect x="568.5" y="354.2" width="4" height="4" fill="#000"/>
<text class="fs" x="581.5" y="358.6" font-size="6.5" font-weight="bold" stroke="#111" stroke-width=".22" fill="#111">F.  I Owned an Ostrich Once, and I Hated It</text>
<rect x="565.8" y="363.8" width="9.4" height="9.4" rx="1.2" fill="#fff" stroke="#8c8c8c" stroke-width="0.9"/>
<text class="fs" x="581.5" y="370.9" font-size="6.5" font-weight="bold" stroke="#111" stroke-width=".22" fill="#111">G.  I've Learned The Truth About Ostriches</text>
<rect x="565.8" y="376.2" width="9.4" height="9.4" rx="1.2" fill="#fff" stroke="#8c8c8c" stroke-width="0.9"/>
<text class="fs" x="581.5" y="383.3" font-size="6.5" font-weight="bold" stroke="#111" stroke-width=".22" fill="#111">H.  A Llama Is Just A Fancy Cow</text>
<rect x="741" y="339.1" width="9.4" height="9.4" rx="1.2" fill="#fff" stroke="#8c8c8c" stroke-width="0.9"/>
<text class="fs" x="758" y="346.2" font-size="6.5" font-weight="bold" stroke="#111" stroke-width=".22" fill="#111">I.  I've Seen A Cow One(1) to Five(5) Times</text>
<rect x="741" y="351.5" width="9.4" height="9.4" rx="1.2" fill="#fff" stroke="#8c8c8c" stroke-width="0.9"/>
<text class="fs" x="758" y="358.6" font-size="6.5" font-weight="bold" stroke="#111" stroke-width=".22" fill="#111">J.  I've Heard A Cow Speak In Its Secret Language</text>
<rect x="741" y="363.8" width="9.4" height="9.4" rx="1.2" fill="#fff" stroke="#8c8c8c" stroke-width="0.9"/>
<text class="fs" x="758" y="370.9" font-size="6.5" font-weight="bold" stroke="#111" stroke-width=".22" fill="#111">K.  Other (Must Be Cow-Related)</text>
<line x1="397.2" y1="386.9" x2="912.8" y2="386.9" stroke="#000" stroke-width="1.3"/>
<text class="fs" x="655" y="395.8" font-size="6.5" font-weight="bold" stroke="#111" stroke-width=".22" fill="#111" text-anchor="middle">19.  Education</text>
<rect x="397.2" y="399" width="515.6" height="3" fill="#cdcdcd"/>
<line x1="397.2" y1="399" x2="912.8" y2="399" stroke="#777" stroke-width="0.8"/>
<line x1="471.7" y1="399" x2="471.7" y2="402" stroke="#777" stroke-width="0.8"/>
<line x1="650.8" y1="399" x2="650.8" y2="402" stroke="#777" stroke-width="0.8"/>
<line x1="713.5" y1="399" x2="713.5" y2="402" stroke="#777" stroke-width="0.8"/>
<line x1="821.5" y1="399" x2="821.5" y2="402" stroke="#777" stroke-width="0.8"/>
<line x1="854.5" y1="399" x2="854.5" y2="402" stroke="#777" stroke-width="0.8"/>
</svg>
</div>
<div style="left:566.5px;top:0px;width:1.5px;height:342.8px;background:#111;"></div>
<div style="left:568.0px;top:0px;width:5.1px;height:342.8px;background:#242424;"></div>
<div style="left:568.1px;top:43px;width:4.8px;height:158.5px;background:#1a5d63;border-radius:2.4px"></div>
</div>
<div id="results" style="left:0;top:373.0px;width:573.1px;height:154.2px;background:linear-gradient(#232323,#262626 45%,#202020)">
<span class="t" style="left:9.50px;top:6.50px;font-size:10px;line-height:11px;color:#8a8a8a;transform:scaleX(0.9472);">3 results in 0 ms.</span>
<svg style="left:550.5px;top:6.5px" width="8.4" height="13.6" viewBox="0 0 8.4 13.6"><path d="M.4 0H8V1.8H.4zM.4 2.8H8L6.8 5.4V13.6H1.6V5.4z" fill="#d0d0d0"/><rect x="3.4" y="6.6" width="1.6" height="2.6" fill="#232323"/></svg>
<div style="left:0px;top:26.3px;width:573.1px;height:1px;background:#2e2e2e;"></div>
<span class="t" style="left:7.50px;top:36.70px;font-size:10.2px;line-height:11px;color:#d8d8d8;font-weight:bold;transform:scaleX(0.9615);">Value</span>
<span class="t" style="left:202.10px;top:36.70px;font-size:10.2px;line-height:11px;color:#d8d8d8;font-weight:bold;transform:scaleX(0.9174);">Page No</span>
<span class="t" style="left:267.10px;top:36.70px;font-size:10.2px;line-height:11px;color:#d8d8d8;font-weight:bold;transform:scaleX(0.9068);">Span</span>
<span class="t" style="left:397.50px;top:36.70px;font-size:10.2px;line-height:11px;color:#d8d8d8;font-weight:bold;transform:scaleX(0.9174);">Confidence</span>
<span class="t" style="left:462.50px;top:36.70px;font-size:10.2px;line-height:11px;color:#d8d8d8;font-weight:bold;transform:scaleX(0.9031);">Source</span>
<div style="left:4.8px;top:52.8px;width:562.7px;height:18px;background:linear-gradient(#2a2a2a,#303030);border:1px solid #5c5c5c;border-right:none;border-radius:3px 0 0 3px"></div>
<span class="t" style="left:7.30px;top:57.10px;font-size:10.2px;line-height:11px;color:#f2f2f2;transform:scaleX(0.8778);">DOMESTIC (Home)</span>
<span class="t" style="left:202.90px;top:57.10px;font-size:10.2px;line-height:11px;color:#f2f2f2;transform:scaleX(0.8110);">1</span>
<span class="t" style="left:267.50px;top:57.10px;font-size:10.2px;line-height:11px;color:#f2f2f2;transform:scaleX(0.9042);">1725-1739 (15)</span>
<span class="t" style="left:397.70px;top:57.10px;font-size:10.2px;line-height:11px;color:#f2f2f2;transform:scaleX(0.8825);">100%</span>
<div style="left:4.8px;top:71.7px;width:562.7px;height:18px;background:linear-gradient(#2a2a2a,#303030);border:1px solid #5c5c5c;border-right:none;border-radius:3px 0 0 3px"></div>
<span class="t" style="left:7.30px;top:75.90px;font-size:10.2px;line-height:11px;color:#f2f2f2;transform:scaleX(0.9179);">FARM (Agriculture)</span>
<span class="t" style="left:202.90px;top:75.90px;font-size:10.2px;line-height:11px;color:#f2f2f2;transform:scaleX(0.8110);">1</span>
<span class="t" style="left:267.50px;top:75.90px;font-size:10.2px;line-height:11px;color:#f2f2f2;transform:scaleX(0.9042);">1741-1758 (18)</span>
<span class="t" style="left:397.70px;top:75.90px;font-size:10.2px;line-height:11px;color:#f2f2f2;transform:scaleX(0.8825);">100%</span>
<div style="left:4.8px;top:90.6px;width:562.7px;height:18px;background:linear-gradient(#2a2a2a,#303030);border:1px solid #5c5c5c;border-right:none;border-radius:3px 0 0 3px"></div>
<span class="t" style="left:7.30px;top:94.50px;font-size:10.2px;line-height:11px;color:#f2f2f2;transform:scaleX(0.8900);">SHOW (Beauty)</span>
<span class="t" style="left:202.90px;top:94.50px;font-size:10.2px;line-height:11px;color:#f2f2f2;transform:scaleX(0.8110);">1</span>
<span class="t" style="left:267.50px;top:94.50px;font-size:10.2px;line-height:11px;color:#f2f2f2;transform:scaleX(0.9042);">1760-1772 (13)</span>
<span class="t" style="left:397.70px;top:94.50px;font-size:10.2px;line-height:11px;color:#f2f2f2;transform:scaleX(0.8825);">100%</span>
<div style="left:5.0px;top:144.2px;width:540.5px;height:4.8px;background:#1a5157;border-radius:2.4px"></div>
</div>
</div>
</section>
<svg id="anno" style="left:0;top:0;z-index:20" width="1000" height="563" viewBox="0 0 1000 563">
<defs><filter id="sh" x="-20%" y="-20%" width="150%" height="150%"><feDropShadow dx=".6" dy=".8" stdDeviation=".9" flood-color="#00001c" flood-opacity=".85"/></filter><radialGradient id="og" cx=".4" cy=".35" r=".8"><stop offset="0" stop-color="#fbab2c"/><stop offset="1" stop-color="#f48a16"/></radialGradient></defs>
<rect x="64.3" y="73.7" width="115.8" height="48.8" fill="none" stroke="#08083a" stroke-width="3" opacity=".7"/>
<rect x="64.3" y="73.7" width="115.8" height="48.8" fill="none" stroke="#f4f400" stroke-width="1.5"/>
<rect x="374" y="455.9" width="102.6" height="62.3" fill="none" stroke="#08083a" stroke-width="3" opacity=".7"/>
<rect x="374" y="455.9" width="102.6" height="62.3" fill="none" stroke="#f4f400" stroke-width="1.5"/>
<g filter="url(#sh)">
<path d="M226.0 96.0L185.1 96.0" stroke="#f7941d" stroke-width="2.6" fill="none"/><path d="M169.6 96.0L186.1 90.7L185.1 96.0L186.1 101.3z" fill="#f7941d"/>
<circle cx="234.6" cy="96" r="10.2" fill="url(#og)"/><text x="234.6" y="100.6" text-anchor="middle" font-family="Liberation Sans,sans-serif" font-weight="bold" font-size="13" fill="#fff" stroke="#fff" stroke-width=".5">1</text>
<path d="M652.0 108.6L544.6 218.5" stroke="#f7941d" stroke-width="2.6" fill="none"/><path d="M533.8 229.6L541.5 214.1L544.6 218.5L549.1 221.5z" fill="#f7941d"/>
<path d="M652.0 108.6L652.5 215.5" stroke="#f7941d" stroke-width="2.6" fill="none"/><path d="M652.6 231.0L647.2 214.5L652.5 215.5L657.8 214.5z" fill="#f7941d"/>
<path d="M652.0 108.6L783.2 220.3" stroke="#f7941d" stroke-width="2.6" fill="none"/><path d="M795.0 230.3L779.0 223.6L783.2 220.3L785.9 215.6z" fill="#f7941d"/>
<circle cx="652" cy="108.6" r="10.5" fill="url(#og)"/><text x="652" y="113.2" text-anchor="middle" font-family="Liberation Sans,sans-serif" font-weight="bold" font-size="13" fill="#fff" stroke="#fff" stroke-width=".5">2</text>
<path d="M327.0 486.6L368.0 486.6" stroke="#f7941d" stroke-width="2.6" fill="none"/><path d="M383.5 486.6L367.0 491.9L368.0 486.6L367.0 481.3z" fill="#f7941d"/>
<circle cx="319" cy="486.5" r="10.1" fill="url(#og)"/><text x="319" y="491.1" text-anchor="middle" font-family="Liberation Sans,sans-serif" font-weight="bold" font-size="13" fill="#fff" stroke="#fff" stroke-width=".5">3</text>
</g></svg>
<div id="frame"></div>
</body>
</html>
